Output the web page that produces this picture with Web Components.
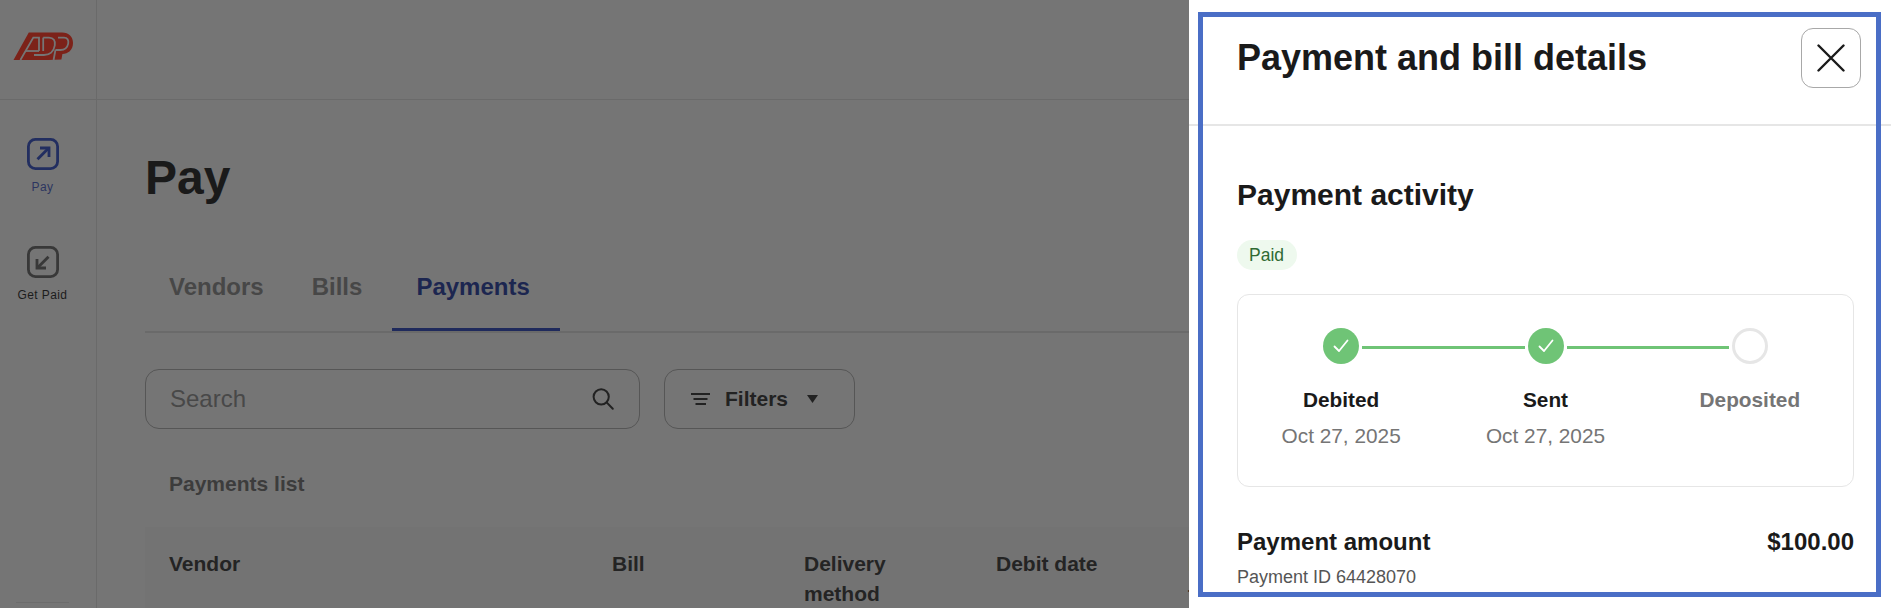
<!DOCTYPE html>
<html lang="en">
<head>
<meta charset="utf-8">
<title>Pay</title>
<style>
  html, body { margin: 0; padding: 0; height: 100%; overflow: hidden; background: #fff; }
  body { font-family: "Liberation Sans", Arial, sans-serif; }
</style>
</head>
<body>
<app-shell>
  <pay-page slot="page">
    <side-nav slot="nav">
      <nav-item active label="Pay" dir="out"></nav-item>
      <nav-item label="Get Paid" dir="in"></nav-item>
    </side-nav>
    <page-tabs slot="tabs"></page-tabs>
    <search-box slot="tools"></search-box>
    <filter-button slot="tools"></filter-button>
    <payments-table slot="table"></payments-table>
  </pay-page>
  <details-panel slot="panel">
    <payment-step state="done" name="Debited" date="Oct 27, 2025" pos="first"></payment-step>
    <payment-step state="done" name="Sent" date="Oct 27, 2025" pos="middle"></payment-step>
    <payment-step state="todo" name="Deposited" date="" pos="last"></payment-step>
  </details-panel>
</app-shell>
<script>
function def(name, html, setup) {
  customElements.define(name, class extends HTMLElement {
    constructor() {
      super();
      this.attachShadow({ mode: 'open' });
    }
    connectedCallback() {
      const h = typeof html === 'function' ? html(this) : html;
      this.shadowRoot.innerHTML = h;
      if (setup) setup(this);
    }
  });
}

def('app-shell', `<style>
  :host { display: grid; grid-template-columns: 1189px 702px; width: 1891px; height: 608px; overflow: hidden; }
</style>
<slot name="page"></slot><slot name="panel"></slot>`);

def('pay-page', `<style>
  :host { display: grid; grid-template-columns: 97px 1092px; height: 608px; overflow: hidden; background: #757575; color: #1a1a1a; }
  .main { display: flex; flex-direction: column; min-width: 0; overflow: hidden; }
  .bar { height: 99px; border-bottom: 1px solid #6a6a6a; flex: none; }
  .content { padding: 50px 0 0 48px; }
  h1 { margin: 0; font: bold 48px/56px "Liberation Sans", Arial, sans-serif; color: #1a1a1a; }
  .tools { display: flex; gap: 24px; margin-top: 36px; }
</style>
<slot name="nav"></slot>
<div class="main">
  <div class="bar"></div>
  <div class="content">
    <h1>Pay</h1>
    <slot name="tabs"></slot>
    <div class="tools"><slot name="tools"></slot></div>
    <slot name="table"></slot>
  </div>
</div>`);

def('side-nav', `<style>
  :host { display: flex; flex-direction: column; height: 608px; box-sizing: border-box; border-right: 1px solid #6a6a6a; padding-right: 11px; }
  .logo { flex: none; border-bottom: 1px solid #6a6a6a; margin-right: -11px; padding: 32px 0 0 13px; height: 67px; }
  svg { display: block; }
  .items { display: flex; flex-direction: column; gap: 51px; padding-top: 38px; }
  .foot { margin: auto 0 5px 16px; width: 53px; height: 1px; background: #6c6c6c; }
</style>
<div class="logo">
  <svg width="60" height="28" viewBox="0 0 60 28" aria-label="ADP logo" role="img">
    <path d="M0.5 28 L15.8 .6 L49 .6 C56 .6 60 5 60 11 C60 18 55 22 49.4 22 L48.4 27.4 L35 28 Z" fill="#7c2219"/>
    <g fill="none" stroke="#757575" stroke-width="1.8">
      <path d="M7.4 28 L20.3 5.6 L26 5.6 L26 19"/>
      <path d="M12.6 19 L26 19"/>
      <path d="M30.2 5.6 L36 5.6 C40.6 5.6 42.6 9 41.8 13.4 C40.8 19.4 36.6 23 31 23 L21 23"/>
      <path d="M30.2 5.6 L30.2 19"/>
      <path d="M45 5.6 L51 5.6 C54.4 5.6 55.8 8.2 55.2 11.6 C54.4 15.6 51.4 18 47.4 18 L42.4 18"/>
      <path d="M42.4 18 L40.6 28"/>
    </g>
  </svg>
</div>
<div class="items"><slot></slot></div>
<div class="foot"></div>`);

def('nav-item', (el) => {
  const active = el.hasAttribute('active');
  const col = active ? '#222e60' : '#383838';
  const arrow = el.getAttribute('dir') === 'out'
    ? '<path d="M10.5 21.2 L21 10.8"/><path d="M13 10 H22 V19"/>'
    : '<path d="M21.5 10.8 L11 21.2"/><path d="M10 13 V22 H19"/>';
  return `<style>
    :host { display: flex; flex-direction: column; align-items: center; gap: 9px; }
    svg { display: block; }
    span { font: 12px/16px "Liberation Sans", Arial, sans-serif; letter-spacing: .4px; color: ${active ? '#2c3560' : '#1c1c1c'}; white-space: nowrap; }
  </style>
  <svg width="32" height="32" viewBox="0 0 32 32" fill="none" stroke="${col}" stroke-width="2.8">
    <rect x="1.4" y="1.4" width="29.2" height="29.2" rx="7"/>${arrow}
  </svg>
  <span>${el.getAttribute('label')}</span>`;
});

def('page-tabs', `<style>
  :host { display: flex; margin-top: 67px; border-bottom: 2px solid #6a6a6a; width: 1044px; }
  div { font: bold 24px/28px "Liberation Sans", Arial, sans-serif; color: #474747; padding: 0 0 30px 24px; white-space: nowrap; }
  .a { padding-right: 24px; }
  .b { padding-right: 30px; }
  .c { padding: 0 30px 27px 24px; color: #1c2650; border-bottom: 3px solid #1f2a5c; }
</style>
<div class="a">Vendors</div><div class="b">Bills</div><div class="c">Payments</div>`);

def('search-box', `<style>
  :host { display: flex; align-items: center; justify-content: space-between; box-sizing: border-box; width: 495px; height: 60px; border: 1px solid #565656; border-radius: 14px; padding: 0 24px; }
  span { font: 24px/28px "Liberation Sans", Arial, sans-serif; color: #484848; }
  svg { display: block; }
</style>
<span>Search</span>
<svg width="24" height="24" viewBox="0 0 24 24" fill="none" stroke="#222" stroke-width="2" stroke-linecap="round">
  <circle cx="10.2" cy="9.8" r="7.6"/><path d="M15.6 15.4 L21.8 21.8"/>
</svg>`);

def('filter-button', `<style>
  :host { display: flex; align-items: center; box-sizing: border-box; width: 191px; height: 60px; border: 1px solid #565656; border-radius: 14px; padding-left: 26px; }
  svg { display: block; flex: none; }
  span { font: bold 21px/28px "Liberation Sans", Arial, sans-serif; color: #222; margin: 0 19px 0 15px; }
</style>
<svg width="19" height="14" viewBox="0 0 19 14" stroke="#222" stroke-width="2"><path d="M0 2 H19 M2.5 7 H16.5 M4.5 12 H15"/></svg>
<span>Filters</span>
<svg width="11" height="8" viewBox="0 0 11 8"><path d="M0 0 H11 L5.5 8 Z" fill="#222"/></svg>`);

def('payments-table', `<style>
  :host { display: block; width: 1044px; }
  h2 { margin: 43px 0 0; padding-left: 24px; font: bold 21px/24px "Liberation Sans", Arial, sans-serif; color: #3c3c3c; }
  .head { margin-top: 31px; padding: 22px 0 0 24px; background: #737373; display: grid; grid-template-columns: 443px 192px 192px 192px 192px; font: bold 21px/30px "Liberation Sans", Arial, sans-serif; color: #242424; }
  .head div { padding-right: 50px; }
</style>
<h2>Payments list</h2>
<div class="head"><div>Vendor</div><div>Bill</div><div>Delivery method</div><div>Debit date</div><div>Paid<br>to</div></div>`);

def('details-panel', `<style>
  :host { display: block; position: relative; height: 608px; overflow: hidden; background: #fff; color: #1a1a1a; font-family: "Liberation Sans", Arial, sans-serif; }
  header { display: flex; justify-content: space-between; padding: 28px 30px 36px 48px; border-bottom: 2px solid #e6e6e6; }
  h1 { margin: 8px 0 0; font: bold 36px/44px "Liberation Sans", Arial, sans-serif; }
  button { width: 60px; height: 60px; padding: 0; background: #fff; border: 1px solid #a8a8a8; border-radius: 12px; display: flex; align-items: center; justify-content: center; }
  button svg { display: block; }
  .body { padding: 50px 37px 0 48px; }
  h2 { margin: 0 0 26px; font: bold 30px/38px "Liberation Sans", Arial, sans-serif; }
  .pill { display: inline-block; vertical-align: top; height: 30px; padding: 0 13px 0 12px; border-radius: 15px; background: #eef9ee; color: #2f6a33; font: 17.5px/30px "Liberation Sans", Arial, sans-serif; }
  .pillrow { height: 30px; }
  .card { margin-top: 24px; box-sizing: border-box; height: 193px; border: 1px solid #e6e6e6; border-radius: 12px; padding: 33px 1px 0; display: grid; grid-template-columns: repeat(3, 1fr); }
  .amount { display: flex; justify-content: space-between; margin: 40px 0 0; font: bold 24px/30px "Liberation Sans", Arial, sans-serif; }
  .pid { margin: 8px 0 0; font: 18px/24px "Liberation Sans", Arial, sans-serif; color: #555; }
  .frame { position: absolute; left: 9px; top: 12px; width: 683px; height: 585px; box-sizing: border-box; border: 5px solid #4a6ec6; pointer-events: none; }
</style>
<header>
  <h1>Payment and bill details</h1>
  <button aria-label="Close"><svg width="28" height="28" viewBox="0 0 28 28" stroke="#1a1a1a" stroke-width="2.4" stroke-linecap="round"><path d="M1.5 1.5 L26.5 26.5 M26.5 1.5 L1.5 26.5"/></svg></button>
</header>
<div class="body">
  <h2>Payment activity</h2>
  <div class="pillrow"><span class="pill">Paid</span></div>
  <div class="card"><slot></slot></div>
  <div class="amount"><span>Payment amount</span><span>$100.00</span></div>
  <div class="pid">Payment ID 64428070</div>
</div>
<div class="frame"></div>`);

def('payment-step', (el) => {
  const done = el.getAttribute('state') === 'done';
  const pos = el.getAttribute('pos');
  const date = el.getAttribute('date');
  return `<style>
    :host { display: block; text-align: center; }
    .track { display: flex; align-items: flex-start; height: 36px; }
    .seg { flex: 1; height: 3px; margin-top: 18px; background: #6fc476; }
    .seg.off { background: transparent; }
    .l { margin-right: 3px; }
    .r { margin-left: 3px; }
    .dot { flex: none; box-sizing: border-box; width: 36px; height: 36px; border-radius: 50%; display: flex; align-items: center; justify-content: center; background: #6fc476; }
    .dot.todo { background: #fff; border: 3px solid #e6e6e6; }
    svg { display: block; }
    .name { margin-top: 24px; font: bold 20.8px/24px "Liberation Sans", Arial, sans-serif; color: ${done ? '#1a1a1a' : '#757575'}; }
    .date { margin-top: 12px; min-height: 24px; font: 20.8px/24px "Liberation Sans", Arial, sans-serif; color: #757575; }
  </style>
  <div class="track">
    <div class="seg l ${pos === 'first' ? 'off' : ''}"></div>
    <div class="dot ${done ? '' : 'todo'}">${done ? '<svg width="16" height="14" viewBox="0 0 16 14" fill="none" stroke="#fff" stroke-width="1.8" stroke-linecap="round" stroke-linejoin="round"><path d="M1.5 7.5 L6 12 L14.5 1.5"/></svg>' : ''}</div>
    <div class="seg r ${pos === 'last' ? 'off' : ''}"></div>
  </div>
  <div class="name">${el.getAttribute('name')}</div>
  <div class="date">${date}</div>`;
});
</script>
</body>
</html>
